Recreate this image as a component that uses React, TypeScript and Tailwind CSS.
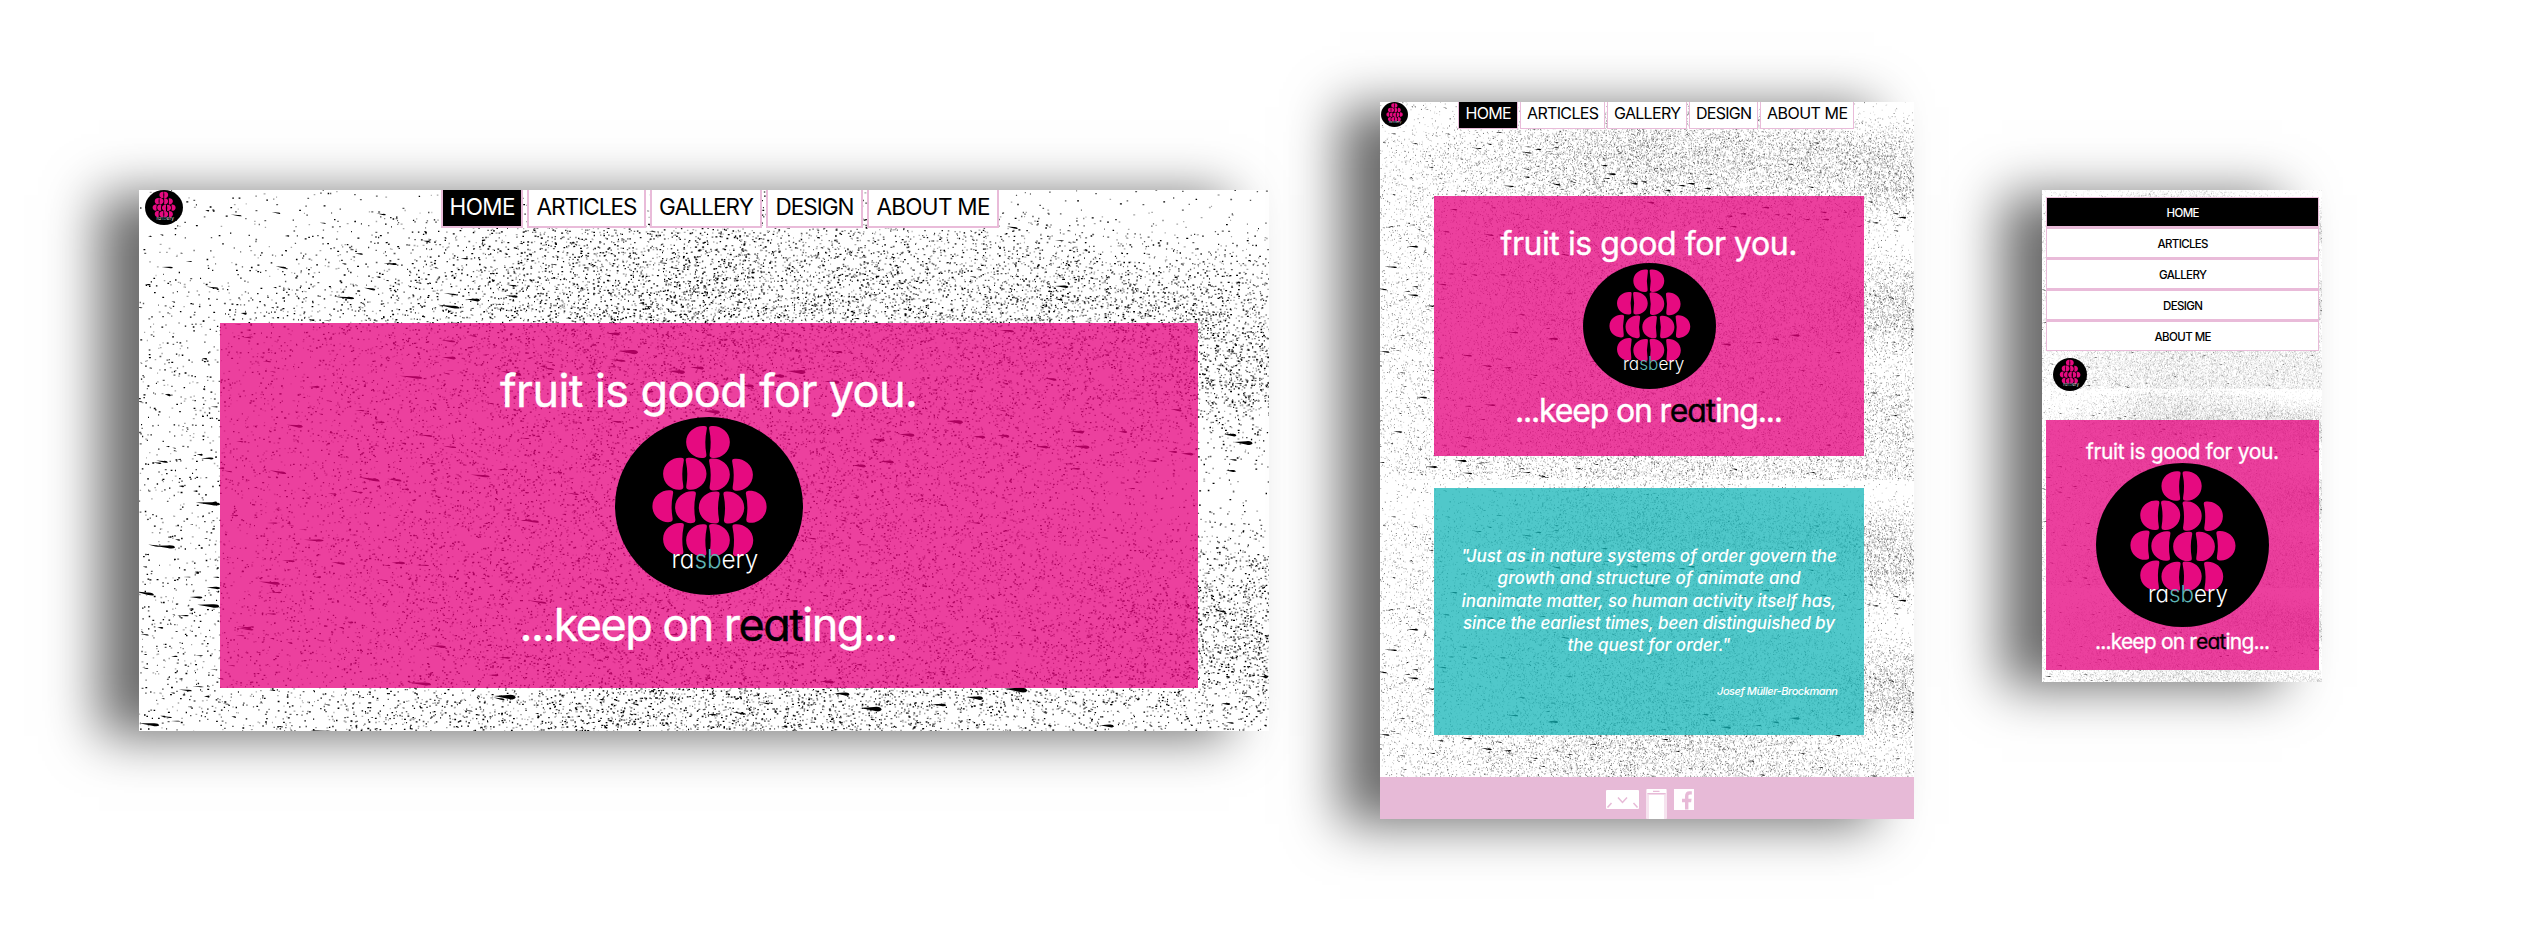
import React, { useLayoutEffect, useRef, useState } from "react";

/* ---------- ink spatter ---------- */

const TILE_W = 1130;
const TILE_H = 803;

function makeRandom(seed: number) {
  let s = seed;
  return () => {
    s = (s + 0x6d2b79f5) | 0;
    let t = Math.imul(s ^ (s >>> 15), 1 | s);
    t = (t + Math.imul(t ^ (t >>> 7), 61 | t)) ^ t;
    return ((t ^ (t >>> 14)) >>> 0) / 4294967296;
  };
}

const bump = (x: number, y: number, cx: number, cy: number, rx: number, ry: number) =>
  Math.exp(-(((x - cx) / rx) ** 2) - ((y - cy) / ry) ** 2);

function density(x: number, y: number) {
  let d = 0.3 + 0.62 * Math.min(1, Math.max(0, (x - 40) / 420));
  d += 0.5 * bump(x, y, 620, 110, 260, 60);
  d += 0.8 * bump(x, y, 1000, 130, 160, 40);
  d += 0.6 * bump(x, y, 1110, 185, 90, 50);
  d += 0.7 * bump(x, y, 1090, 440, 130, 60);
  d += 0.3 * bump(x, y, 640, 500, 200, 80);
  d -= 1.0 * bump(x, y, 1130, 0, 330, 75);
  d -= 0.8 * bump(x, y, 1100, 300, 150, 75);
  d -= 0.6 * bump(x, y, 1080, 560, 170, 50);
  d -= 0.35 * bump(x, y, 150, 30, 260, 60);
  d -= 0.5 * bump(x, y, 600, 0, 900, 22);
  return Math.max(0.08, d) / 1.5;
}

const BIG_DROPS: [number, number, number][] = [
  [476, 144, 9], [492, 162, 13], [336, 110, 9], [312, 168, 9], [700, 162, 6],
  [1093, 245, 8], [1107, 253, 12], [1050, 264, 8], [1095, 270, 5], [1093, 281, 6],
  [940, 242, 9], [945, 257, 10], [905, 257, 8], [985, 242, 6], [1035, 262, 6],
  [818, 232, 11], [842, 247, 8], [866, 246, 8], [770, 245, 10], [741, 250, 9],
  [750, 272, 9], [722, 276, 9], [695, 192, 10], [660, 182, 12], [560, 178, 9],
  [610, 196, 9], [575, 222, 11], [540, 182, 11], [640, 186, 10],
  [369, 507, 14], [705, 504, 10], [735, 519, 14], [880, 500, 15], [970, 536, 9],
  [838, 508, 11], [690, 492, 9], [1088, 514, 6], [1092, 533, 5],
  [1098, 625, 5], [1102, 650, 5], [1090, 668, 7], [175, 763, 14], [950, 730, 8],
];

function drop(x: number, y: number, l: number, thin: number, tilt: number) {
  const h = l * thin;
  const f = (n: number) => n.toFixed(1);
  return (
    `M${f(x - l)} ${f(y - l * tilt)}L${f(x)} ${f(y - h)}Q${f(x + l * 0.5)} ${f(y - h * 1.4)} ${f(x + l * 0.55)} ${f(y + l * tilt * 0.6)}` +
    `Q${f(x + l * 0.4)} ${f(y + h * 1.7)} ${f(x)} ${f(y + h * 0.8)}Z`
  );
}

function buildSpatter() {
  const r = makeRandom(20);
  const layers = ["", "", ""];
  for (let i = 0; i < 92000; i++) {
    const x = r() * TILE_W;
    const y = r() * TILE_H;
    const keep = r();
    const pick = r();
    const len = 0.9 + r() * 1.1;
    if (keep > density(x, y)) continue;
    const dark = x < 600 ? 0.4 : 0.24;
    const k = pick < dark ? 0 : pick < 0.66 ? 1 : 2;
    layers[k] += `M${x.toFixed(1)} ${y.toFixed(1)}h${len.toFixed(1)}`;
  }
  let streaks = "";
  for (let i = 0; i < 1500; i++) {
    const x = r() * TILE_W;
    const y = 20 + r() * (TILE_H - 20);
    const l = 1.6 + r() * r() * 9;
    const left = 1 - x / TILE_W;
    if (r() > 0.08 + left * 0.75) continue;
    streaks += drop(x, y, l, 0.06 + r() * 0.08 + (l < 4 ? 0.12 : 0), r() * 0.24 - 0.02);
  }
  for (let i = 0; i < 40; i++) {
    const x = r() * 420;
    const y = 60 + r() * (TILE_H - 70);
    streaks += drop(x, y, 8 + r() * 8, 0.07 + r() * 0.05, 0.04 + r() * 0.18);
  }
  for (const [x, y, l] of BIG_DROPS) streaks += drop(x, y, l, 0.15, 0.08);
  return { layers, streaks };
}

const SPATTER = buildSpatter();

function Spatter({ width, height, offset = 0, repeat = 1 }: { width: number; height: number; offset?: number; repeat?: number }) {
  const ids = Array.from({ length: repeat }, (_, i) => i);
  return (
    <div className="absolute inset-0 overflow-hidden" aria-hidden="true">
      {ids.map((i) => (
        <svg
          key={i}
          className="absolute left-0 block"
          style={{ top: offset + i * height }}
          width={width}
          height={height}
          viewBox={`0 0 ${TILE_W} ${TILE_H}`}
          preserveAspectRatio="none"
        >
          <g stroke="#000" strokeWidth="1.3" fill="none">
            <path d={SPATTER.layers[0]} strokeOpacity="1" />
            <path d={SPATTER.layers[1]} strokeOpacity="0.65" />
            <path d={SPATTER.layers[2]} strokeOpacity="0.35" />
          </g>
          <path d={SPATTER.streaks} fill="#000" />
        </svg>
      ))}
    </div>
  );
}

/* ---------- logo ---------- */

const SEEDS: [number, number, "L" | "R"][] = [
  [213, 27, "L"], [282, 27, "R"],
  [144, 122, "L"], [212, 122, "R"], [282, 124, "R"], [351, 125, "R"],
  [112, 219, "L"], [180, 222, "L"], [251, 223, "L"], [325, 223, "R"], [392, 221, "R"],
  [144, 317, "L"], [213, 321, "L"], [282, 320, "R"], [352, 321, "R"],
];

const HALF = "M58 1C34 -4 0 14 0 48S32 100 55 95Q62 94 60.5 84Q54 48 61.5 12Q64 2 58 1Z";

function Logo({ className }: { className: string }) {
  return (
    <svg className={className} viewBox="0 0 563 533" preserveAspectRatio="none" role="img">
      <ellipse cx="281.5" cy="266.5" rx="281.5" ry="266.5" fill="#000" />
      <g fill="#e60a80">
        {SEEDS.map(([x, y, side], i) => (
          <path key={i} d={HALF} transform={side === "L" ? `translate(${x} ${y})` : `translate(${x + 62} ${y}) scale(-1 1)`} />
        ))}
      </g>
      <text
        x="169"
        y="453"
        textLength="260"
        lengthAdjust="spacingAndGlyphs"
        fontSize="76"
        fontWeight="300"
        fill="#fff"
        className="font-['Inter',sans-serif] [font-feature-settings:'cv11']"
      >
        ra<tspan fill="#5fb5b5">sb</tspan>ery
      </text>
    </svg>
  );
}

/* ---------- text that is tracked to a given measure ---------- */

function Tracked({ measure, className = "", children }: { measure: number; className?: string; children: React.ReactNode }) {
  const ref = useRef<HTMLSpanElement>(null);
  const [tracking, setTracking] = useState(0);
  useLayoutEffect(() => {
    const el = ref.current;
    if (!el) return;
    const natural = el.getBoundingClientRect().width;
    const gaps = Math.max(1, (el.textContent || "").length - 1);
    setTracking((measure - natural) / gaps);
  }, [measure]);
  return (
    <span
      ref={ref}
      className={`inline-block whitespace-nowrap ${className}`}
      style={{ letterSpacing: tracking, marginRight: -tracking }}
    >
      {children}
    </span>
  );
}

function Slogan({ measure }: { measure: number }) {
  return (
    <Tracked measure={measure}>
      ...keep on r<span className="text-black">eat</span>ing...
    </Tracked>
  );
}

/* ---------- pages ---------- */

const SHADOW = "shadow-[-40px_5px_50px_rgba(0,0,0,0.58)]";

function TopNav({ items, itemClass, className }: { items: [string, string, number][]; itemClass: string; className: string }) {
  return (
    <nav className={className}>
      {items.map(([label, width, measure], i) => (
        <a key={label} className={`flex justify-center border-[#e9bbd9] ${i === 0 ? "bg-black text-white" : "bg-white text-black"} ${itemClass} ${width}`}>
          <Tracked measure={measure}>{label}</Tracked>
        </a>
      ))}
    </nav>
  );
}

function DesktopPage() {
  return (
    <section className={`relative mt-[190px] h-[541px] w-[1130px] shrink-0 bg-white ${SHADOW}`}>
      <Spatter width={1130} height={803} />
      <div className="relative flex h-full flex-col">
        <header className="flex h-[133px] items-start">
          <Logo className="ml-[6px] block h-[35px] w-[38px]" />
          <TopNav
            className="ml-[258px] flex gap-[4px]"
            itemClass="h-[38px] border-2 border-t-0 pl-px text-[22.5px] leading-[33px]"
            items={[
              ["HOME", "w-[82px]", 66],
              ["ARTICLES", "w-[119px]", 101],
              ["GALLERY", "w-[112px]", 95],
              ["DESIGN", "w-[97px]", 79],
              ["ABOUT ME", "w-[132px]", 114],
            ]}
          />
        </header>
        <div className="ml-[81px] flex h-[365px] w-[978px] flex-col items-center bg-[rgba(230,0,126,0.75)] pt-[38px] text-[45px] leading-[56px] text-white">
          <div className="relative top-[2px] [-webkit-text-stroke:0.4px_currentColor]">
            <Tracked measure={418}>fruit is good for you.</Tracked>
          </div>
          <Logo className="block h-[178px] w-[188px] shrink-0" />
          <div className="relative top-[2px] [-webkit-text-stroke:0.4px_currentColor]">
            <Slogan measure={379} />
          </div>
        </div>
      </div>
    </section>
  );
}

function MailIcon() {
  return (
    <svg className="mt-px block h-[19px] w-[33px]" viewBox="0 0 33 19">
      <rect width="33" height="19" rx="1" fill="#fff" />
      <path d="M12 7.5l4.5 5 4.5-5M1.5 17.5l4-4.5M31.5 17.5l-4-4.5" fill="none" stroke="#e7bad7" strokeWidth="1.5" />
    </svg>
  );
}

function PhoneIcon() {
  return (
    <svg className="block h-[30px] w-[21px]" viewBox="0 0 21 30">
      <rect width="21" height="30" rx="1" fill="#f6e3ef" />
      <path d="M1 0h19v4H1zM3 6h15v24H3z" fill="#fff" />
      <path d="M7 1.8h6.5v1.2H7zM1.5 4h18v1.3h-18z" fill="#e7bad7" />
    </svg>
  );
}

function FacebookIcon() {
  return (
    <svg className="block h-[21px] w-[20px]" viewBox="0 0 20 21">
      <rect width="20" height="21" fill="#fff" />
      <path d="M11 20.5v-7.300h-3V9.800h3V7.500C11 4 12.600 2.300 15.400 2.300H17.800v3.200h-1.700c-1.300 0-1.700.7-1.700 1.900v2.400h3.200l-.5 3.400h-2.700v7.300z" fill="#e7bad7" />
    </svg>
  );
}

const QUOTE: [string, number][] = [
  ["\"Just as in nature systems of order govern the", 376],
  ["growth and structure of animate and", 303],
  ["inanimate matter, so human activity itself has,", 375],
  ["since the earliest times, been distinguished by", 372],
  ["the quest for order.\"", 163],
];

function TabletPage() {
  return (
    <section className={`relative mt-[102px] ml-[111px] h-[717px] w-[534px] shrink-0 bg-white ${SHADOW}`}>
      <Spatter width={534} height={383} offset={-5} repeat={2} />
      <div className="relative flex h-full flex-col">
        <header className="flex h-[94px] items-start">
          <Logo className="ml-px block h-[25px] w-[27px]" />
          <TopNav
            className="ml-[50px] flex gap-[2px]"
            itemClass="h-[27px] border border-t-0 pl-px text-[16px] leading-[23px]"
            items={[
              ["HOME", "w-[60px]", 46],
              ["ARTICLES", "w-[85px]", 72],
              ["GALLERY", "w-[80px]", 67],
              ["DESIGN", "w-[69px]", 56],
              ["ABOUT ME", "w-[94px]", 81],
            ]}
          />
        </header>
        <div className="ml-[54px] flex h-[260px] w-[430px] flex-col items-center bg-[rgba(230,0,126,0.75)] pt-[26px] text-[32px] leading-[41px] text-white">
          <div className="relative top-px [-webkit-text-stroke:0.4px_currentColor]">
            <Tracked measure={297}>fruit is good for you.</Tracked>
          </div>
          <Logo className="block h-[126px] w-[133px] shrink-0" />
          <div className="relative top-px [-webkit-text-stroke:0.4px_currentColor]">
            <Slogan measure={268} />
          </div>
        </div>
        <blockquote className="mt-[32px] ml-[54px] flex h-[247px] w-[430px] flex-col items-center bg-[rgba(22,182,184,0.75)] pt-[57px] text-[17px] leading-[22.3px] font-medium text-white italic">
          {QUOTE.map(([line, measure]) => (
            <Tracked key={line} measure={measure}>
              {line}
            </Tracked>
          ))}
          <cite className="mt-[28px] mr-[26px] self-end text-[11px] leading-[14px]">
            <Tracked measure={121}>Josef Müller-Brockmann</Tracked>
          </cite>
        </blockquote>
        <footer className="mt-auto flex h-[42px] items-start justify-center gap-[7px] bg-[#e7bad7] pt-[12px] pl-[5px]">
          <MailIcon />
          <PhoneIcon />
          <FacebookIcon />
        </footer>
      </div>
    </section>
  );
}

const MOBILE_NAV: [string, number][] = [
  ["HOME", 33],
  ["ARTICLES", 51],
  ["GALLERY", 48],
  ["DESIGN", 40],
  ["ABOUT ME", 57],
];

function MobilePage() {
  return (
    <section className={`relative mt-[190px] ml-[128px] h-[492px] w-[280px] shrink-0 bg-white ${SHADOW}`}>
      <Spatter width={280} height={199} repeat={3} />
      <div className="relative flex h-full flex-col px-[4px] pt-[7px]">
        <nav className="flex w-[273px] flex-col gap-[3px] bg-[#e9bbd9] p-px">
          {MOBILE_NAV.map(([label, measure], i) => (
            <a
              key={label}
              className={`flex h-[28px] justify-center pl-px text-[11.5px] leading-[30px] font-medium ${i === 0 ? "bg-black text-white" : "bg-white text-black"}`}
            >
              <Tracked measure={measure}>{label}</Tracked>
            </a>
          ))}
        </nav>
        <Logo className="mt-[7px] ml-[7px] block h-[33px] w-[34px]" />
        <div className="mt-[29px] flex h-[250px] w-[273px] flex-col items-center bg-[rgba(230,0,126,0.75)] pt-[19px] text-[21px] leading-[24px] text-white">
          <div className="relative top-px [-webkit-text-stroke:0.3px_currentColor]">
            <Tracked measure={193}>fruit is good for you.</Tracked>
          </div>
          <Logo className="block h-[164px] w-[173px] shrink-0" />
          <div className="relative top-px leading-[28px] [-webkit-text-stroke:0.3px_currentColor]">
            <Slogan measure={175} />
          </div>
        </div>
      </div>
    </section>
  );
}

export default function App() {
  return (
    <main className="flex h-[939px] w-[2526px] items-start overflow-hidden bg-white pl-[139px] font-['Inter',sans-serif] [font-feature-settings:'cv11']">
      <DesktopPage />
      <TabletPage />
      <MobilePage />
    </main>
  );
}
